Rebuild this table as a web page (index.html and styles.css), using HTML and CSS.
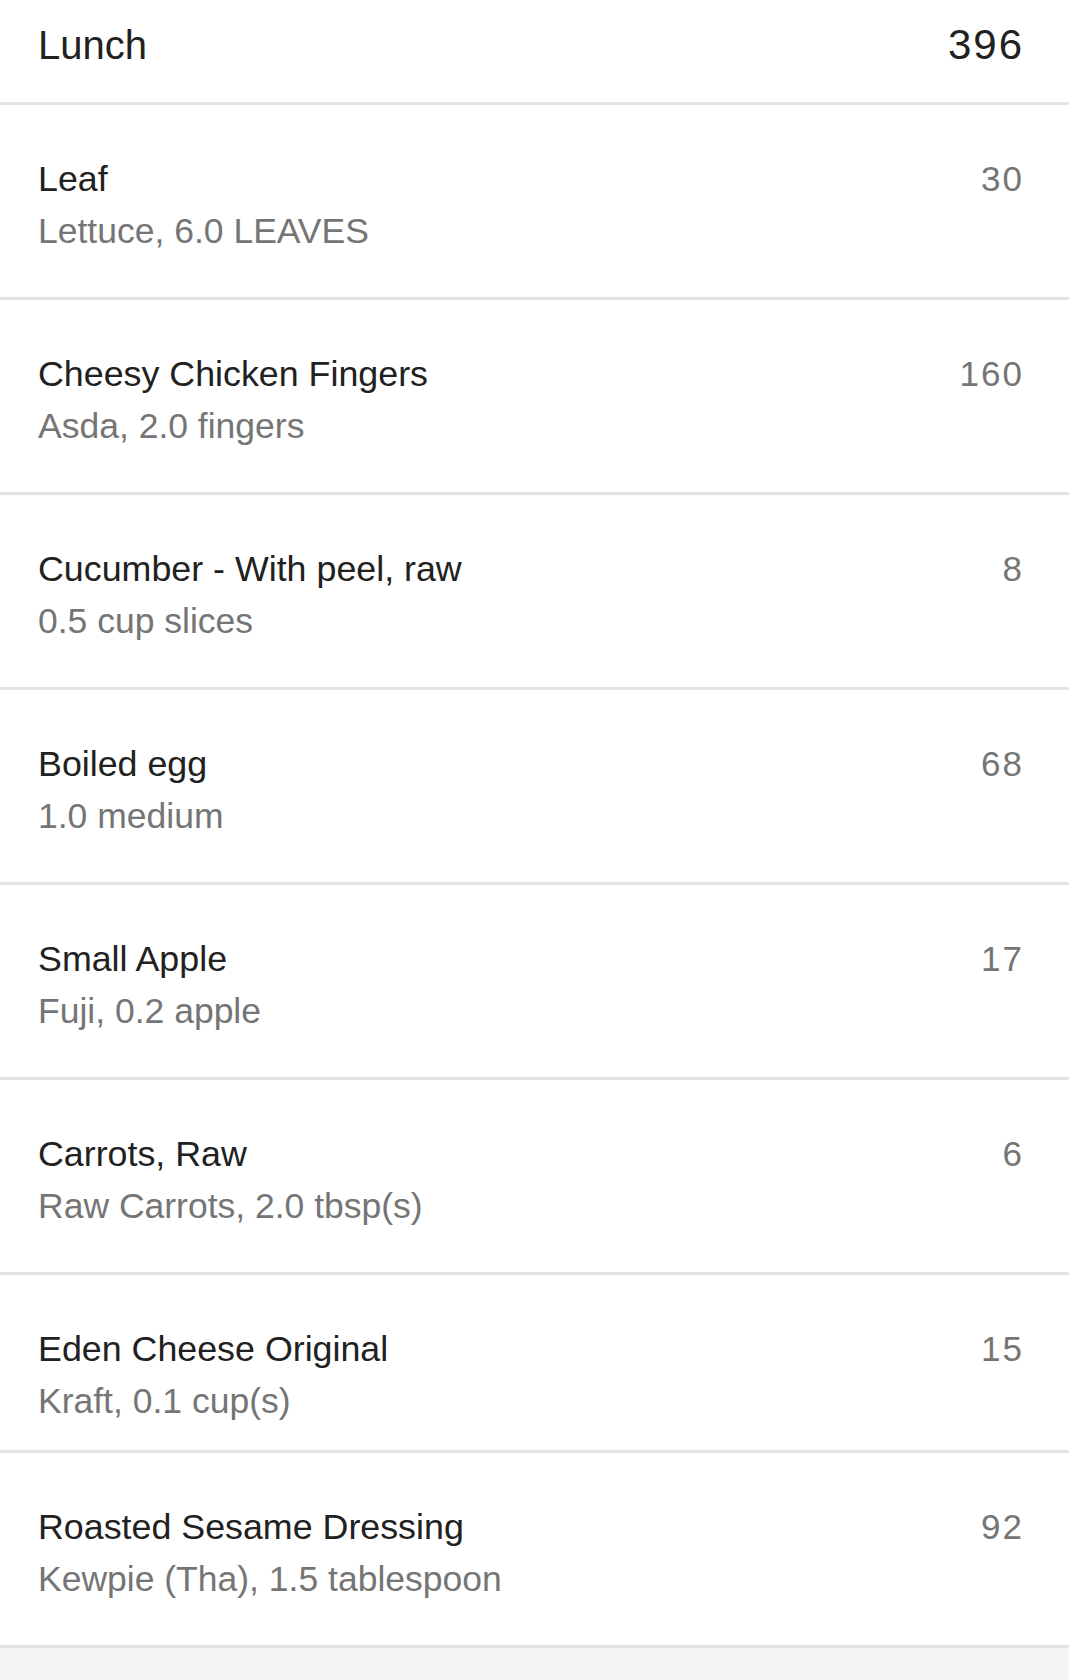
FILE: index.html
```html
<!DOCTYPE html>
<html>
<head>
<meta charset="utf-8">
<link rel="stylesheet" href="styles.css">
</head>
<body>
<div class="list">
  <div class="header">
    <span class="header-title">Lunch</span>
    <span class="header-total">396</span>
  </div>
  <div class="row">
    <div class="info"><div class="name">Leaf</div><div class="detail">Lettuce, 6.0 LEAVES</div></div>
    <div class="cal">30</div>
  </div>
  <div class="row">
    <div class="info"><div class="name">Cheesy Chicken Fingers</div><div class="detail">Asda, 2.0 fingers</div></div>
    <div class="cal">160</div>
  </div>
  <div class="row">
    <div class="info"><div class="name">Cucumber - With peel, raw</div><div class="detail">0.5 cup slices</div></div>
    <div class="cal">8</div>
  </div>
  <div class="row">
    <div class="info"><div class="name">Boiled egg</div><div class="detail">1.0 medium</div></div>
    <div class="cal">68</div>
  </div>
  <div class="row">
    <div class="info"><div class="name">Small Apple</div><div class="detail">Fuji, 0.2 apple</div></div>
    <div class="cal">17</div>
  </div>
  <div class="row">
    <div class="info"><div class="name">Carrots, Raw</div><div class="detail">Raw Carrots, 2.0 tbsp(s)</div></div>
    <div class="cal">6</div>
  </div>
  <div class="row row-short">
    <div class="info"><div class="name">Eden Cheese Original</div><div class="detail">Kraft, 0.1 cup(s)</div></div>
    <div class="cal">15</div>
  </div>
  <div class="row">
    <div class="info"><div class="name">Roasted Sesame Dressing</div><div class="detail">Kewpie (Tha), 1.5 tablespoon</div></div>
    <div class="cal">92</div>
  </div>
  <div class="footer"></div>
</div>
</body>
</html>
```
FILE: styles.css
```css
html, body {
  margin: 0;
  padding: 0;
  background: #ffffff;
}
body {
  font-family: "Liberation Sans", Arial, sans-serif;
  height: 1680px;
  overflow: hidden;
}
.list {
  width: 1069px;
  display: flex;
  flex-direction: column;
}
.header {
  height: 105px;
  box-sizing: border-box;
  display: flex;
  justify-content: space-between;
  align-items: flex-start;
  padding: 19px 45px 0 38px;
  line-height: 52px;
  border-bottom: 3px solid #e2e2e2;
  color: #212121;
}
.header-title {
  font-size: 40px;
}
.header-total {
  font-size: 42px;
  letter-spacing: 2px;
}
.row {
  height: 195px;
  box-sizing: border-box;
  display: flex;
  justify-content: space-between;
  align-items: flex-start;
  padding: 48px 45px 0 38px;
  border-bottom: 3px solid #e2e2e2;
  line-height: 52px;
}
.row-short {
  height: 178px;
}
.name {
  font-size: 35.8px;
  color: #212121;
}
.detail {
  font-size: 35.5px;
  color: #757575;
}
.cal {
  font-size: 35px;
  color: #757575;
  letter-spacing: 2px;
}
.footer {
  height: 40px;
  background: #f4f4f4;
}
```
